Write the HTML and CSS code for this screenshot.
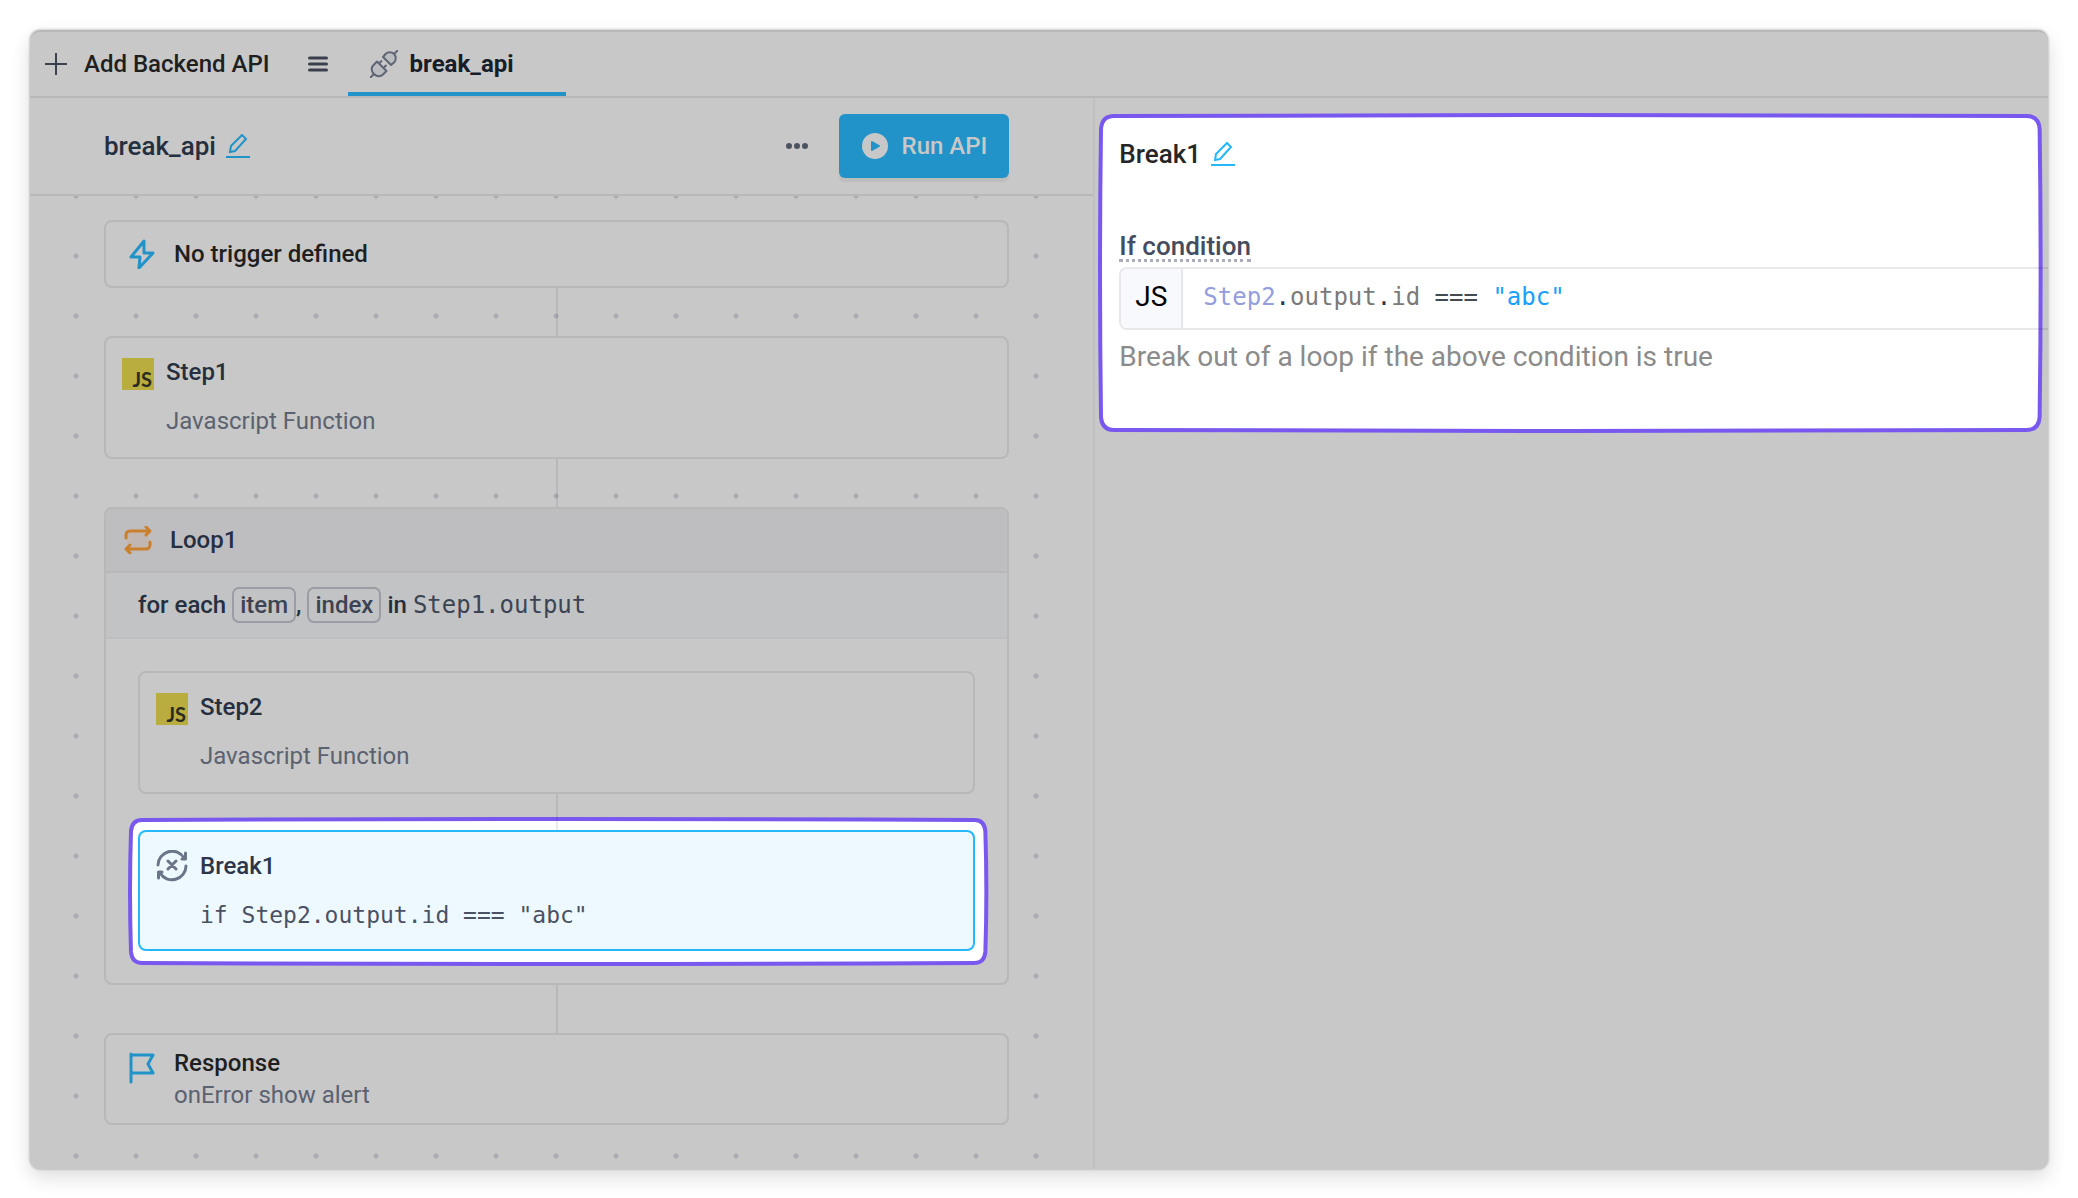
FILE: index.html
```html
<!DOCTYPE html>
<html lang="en">
<head>
<meta charset="utf-8">
<title>break_api</title>
<link rel="stylesheet" href="styles.css">
</head>
<body>
<div class="app">
  <nav class="tabs">
    <button class="add" type="button">
      <svg width="22" height="22" viewBox="0 0 22 22" fill="none" stroke="#3a414d" stroke-width="2"><path d="M11 0v22M0 11h22"/></svg>
      Add Backend API
    </button>
    <button class="menu" type="button" aria-label="All APIs">
      <svg width="20" height="16" viewBox="0 0 20 16" fill="none" stroke="#3a414d" stroke-width="3" stroke-linecap="round"><path d="M1.500 2h17M1.500 8h17M1.500 14h17"/></svg>
    </button>
    <a class="tab" href="#break_api">
      <svg width="28" height="28" viewBox="0 0 28 28" fill="none" stroke="#5f6673" stroke-width="2" stroke-linejoin="round"><path fill="#bbbcc0" d="M7 11.500L3.500 15a6 6 0 0 0 0 8.500l1 1a6 6 0 0 0 8.500 0L16.500 21z" /><path fill="#bbbcc0" d="M13 7l2.500-3a6 6 0 0 1 8.500 0a6 6 0 0 1 0 8.500L21 15z"/><path d="M0 28l4-4M24 4l4-4M9 13.500l3-3M13.500 18l3-3"/></svg>
      break_api
    </a>
  </nav>
  <div class="columns">
    <main class="flow">
      <header class="bar">
        <h1 class="name">break_api</h1>
        <button class="edit dim" type="button" aria-label="Rename"><svg width="24" height="24" viewBox="0 0 24 24" fill="none" stroke="currentColor" stroke-width="2"><path d="M0 23h24M4 18l1-6L16 1l4 4L9 17z"/></svg></button>
        <button class="more" type="button" aria-label="More"><svg width="22" height="6" viewBox="0 0 22 6" fill="#4b5262"><circle cx="3" cy="3" r="3"/><circle cx="11" cy="3" r="3"/><circle cx="19" cy="3" r="3"/></svg></button>
        <button class="run" type="button">
          <svg width="26" height="26" viewBox="0 0 26 26"><circle cx="13" cy="13" r="13" fill="#c8c8c8"/><path d="M10 9l7 4-7 4z" fill="#2193c9" stroke="#2193c9" stroke-width="2" stroke-linejoin="round"/></svg>
          Run API
        </button>
      </header>
      <div class="canvas">
        <section class="card trigger">
          <svg width="26" height="30" viewBox="0 0 26 30" fill="none" stroke="#2193c9" stroke-width="3" stroke-linejoin="round"><path d="M15 2L2 18h9l-1 11L24 14h-9z"/></svg>
          <h2>No trigger defined</h2>
        </section>
        <div class="wire"></div>
        <section class="card step">
          <span class="js">JS</span>
          <div class="text"><h2>Step1</h2><p>Javascript Function</p></div>
        </section>
        <div class="wire"></div>
        <section class="card loop">
          <header class="loop-head">
            <svg width="28" height="28" viewBox="0 0 28 28" fill="none" stroke="#ca7f2c" stroke-width="3" stroke-linecap="round" stroke-linejoin="round"><rect x="3" y="5" width="22" height="18" rx="3" fill="#c2b6b0" stroke="none"/><path d="M2 12V9a4 4 0 0 1 4-4h20M22 1l4 4-4 4M26 16v3a4 4 0 0 1-4 4H2M6 19l-4 4 4 4"/></svg>
            <h2>Loop1</h2>
          </header>
          <p class="each">for each <span class="var">item</span><span class="comma">,</span><span class="var">index</span> in <code>Step1.output</code></p>
          <div class="body">
            <section class="card step">
              <span class="js">JS</span>
              <div class="text"><h2>Step2</h2><p>Javascript Function</p></div>
            </section>
            <div class="wire short"></div>
            <div class="marked">
              <svg class="ring" viewBox="0 0 860 148" preserveAspectRatio="none"><path d="M14 3Q430 1 846 3Q856 3 857 14Q859 74 857 134Q856 145 846 145Q430 147 14 145Q4 145 3 134Q1 74 3 14Q4 3 14 3Z"/></svg>
              <section class="card step active">
                <svg width="32" height="32" viewBox="0 0 32 32" fill="none" stroke="#6b7588" stroke-width="3" stroke-linecap="round" stroke-linejoin="round"><path d="M2 15A14 14 0 0 1 28 8M29.500 3v6H26M30 16A14 14 0 0 1 4 23M2.500 28v-6H6M12 11l8 8M20 11l-8 8"/></svg>
                <div class="text"><h2>Break1</h2><p><code>if Step2.output.id === "abc"</code></p></div>
              </section>
            </div>
          </div>
        </section>
        <div class="wire"></div>
        <section class="card response">
          <svg width="26" height="32" viewBox="0 0 26 32" fill="none" stroke="#2193c9" stroke-width="3" stroke-linecap="round" stroke-linejoin="round"><path d="M2 2v28M2 3h22l-5 9 5 9H2"/></svg>
          <div><h2>Response</h2><p>onError show alert</p></div>
        </section>
      </div>
    </main>
    <aside class="side">
      <section class="panel">
        <svg class="ring" viewBox="0 0 944 320" preserveAspectRatio="none"><path d="M16 3Q472 1 928 3Q940 3 941 16Q943 160 941 304Q940 317 928 317Q472 319 16 317Q4 317 3 304Q1 160 3 16Q4 3 16 3Z"/></svg>
        <div class="title"><h2>Break1</h2>
          <button class="edit" type="button" aria-label="Rename step"><svg width="24" height="26" viewBox="0 0 24 26" fill="none" stroke="currentColor" stroke-width="2"><path d="M0 24h24M4 19l1-6L16 2l4 4L9 18z"/></svg></button>
        </div>
        <span class="label" id="cond">If condition</span>
        <div class="field">
          <span class="lang">JS</span>
          <code class="code" role="textbox" aria-labelledby="cond" contenteditable="true" spellcheck="false"><span class="id">Step2</span><span class="dot">.</span>output<span class="dot">.</span>id <span class="op">===</span> <span class="str">"abc"</span></code>
        </div>
        <p class="hint">Break out of a loop if the above condition is true</p>
      </section>
    </aside>
  </div>
</div>
</body>
</html>
```
FILE: styles.css
```css
* { box-sizing: border-box; }
body {
  margin: 0;
  padding: 30px 30px 28px;
  background: #fff;
  color: #262f40;
  font: 400 24px/32px Roboto, "Liberation Sans", sans-serif;
}
h1, h2, p { margin: 0; font-size: 24px; font-weight: 400; }
h2 { font-weight: 500; }
svg { display: block; flex: none; }
button { padding: 0; border: 0; background: none; color: inherit; font: inherit; }
code { font-family: "DejaVu Sans Mono", monospace; }

.app {
  display: flex;
  flex-direction: column;
  min-height: calc(100vh - 59px);
  border-top: 2px solid #b8b8b8;
  border-radius: 10px;
  background: #c8c8c8;
  box-shadow: 0 0 2px 1px rgba(0, 0, 0, .16), 0 8px 20px rgba(0, 0, 0, .14);
}

.tabs {
  display: flex;
  height: 66px;
  border-bottom: 2px solid #b8b8b8;
}
.add {
  display: flex;
  align-items: center;
  gap: 17px;
  padding-left: 15px;
  color: #1f1f1f;
  font-weight: 500;
}
.menu { padding: 0 20px 0 38px; }
.tab {
  display: flex;
  align-items: center;
  gap: 12px;
  width: 218px;
  padding: 4px 0 0 22px;
  border-bottom: 4px solid #2193c9;
  color: #171d29;
  font-weight: 700;
  text-decoration: none;
}

.columns { display: flex; flex: 1; }
.flow {
  display: flex;
  flex: 1066;
  flex-direction: column;
  min-width: 0;
  border-right: 2px solid #c0c0c1;
}
.bar {
  display: flex;
  align-items: center;
  height: 98px;
  padding: 0 84px 0 74px;
  border-bottom: 2px solid #b8b8b8;
}
.name { font-size: 26px; font-weight: 500; }
.edit { margin-left: 10px; color: #25b8fb; }
.dim { color: #2193c9; }
.more { margin-left: auto; }
.run {
  display: flex;
  align-items: center;
  gap: 14px;
  height: 64px;
  margin-left: 31px;
  padding: 0 22px 0 23px;
  border-radius: 6px;
  background: #2193c9;
  box-shadow: 0 4px 0 #bdbdbd;
  color: #c8c8c8;
  font-weight: 500;
}

.canvas {
  flex: 1;
  padding: 24px 84px 44px 74px;
  background: radial-gradient(circle, #ababb2 2px, transparent 3px) 16px -30px / 60px 60px;
}
.card {
  display: flex;
  border: 2px solid #b8b8b8;
  border-radius: 8px;
  background: #c8c8c8;
}
.card p { color: #5b6270; }
.wire {
  width: 2px;
  height: 48px;
  margin: 0 auto;
  background: rgba(0, 0, 20, .08);
}
.short { position: relative; z-index: 1; height: 36px; }
.trigger { align-items: center; gap: 19px; height: 68px; padding-left: 23px; }
.trigger h2, .response h2 { color: #1f1f1f; }
.step { gap: 12px; height: 123px; padding: 18px 16px; }
.text p { margin-top: 17px; }
.js {
  width: 32px;
  height: 32px;
  margin-top: 2px;
  padding: 8px 2px 0 0;
  background: #baad3f;
  color: #2a2a22;
  font: 700 20px/26px Lato, sans-serif;
  text-align: right;
}
.loop { flex-direction: column; overflow: hidden; }
.loop-head {
  display: flex;
  align-items: center;
  gap: 18px;
  height: 64px;
  padding-left: 18px;
  border-bottom: 2px solid #b8b8ba;
  background: #bebec0;
}
.card .each {
  display: flex;
  align-items: center;
  gap: 6px;
  height: 66px;
  padding-left: 32px;
  border-bottom: 2px solid #bebec0;
  background: #c2c3c5;
  color: #262f40;
  font-weight: 500;
}
.each code { color: #3c4453; font-weight: 400; }
.var {
  height: 36px;
  padding: 0 6px;
  border: 2px solid #9b9da5;
  border-radius: 7px;
  color: #3c4453;
}
.comma { margin-left: -6px; }
.body { padding: 32px; }
.marked { position: relative; }
.ring {
  position: absolute;
  top: -13px;
  left: -10px;
  width: calc(100% + 23px);
  height: calc(100% + 28px);
  overflow: visible;
}
.ring path { fill: #fff; stroke: #7858ef; stroke-width: 4px; vector-effect: non-scaling-stroke; }
.card.active { position: relative; height: 121px; border-color: #25b8fb; background: #edf9ff; }
.active h2 { color: #2c3549; }
.active code { color: #4a5162; font-size: 23px; }
.response { gap: 19px; height: 92px; padding: 12px 23px; }
.response svg { margin-top: 5px; }

.side { flex: 952; min-width: 0; padding: 15px 0 0 3px; }
.panel { position: relative; padding: 25px 0 60px 21px; }
.side .ring { top: 0; left: 0; width: calc(100% - 5px); height: 100%; }
.title, .label, .field, .hint { position: relative; }
.title { display: flex; align-items: center; }
.title h2 { color: #262626; font-size: 26px; }
.label {
  display: block;
  width: fit-content;
  margin-top: 63px;
  border-bottom: 3px dotted #a9adbd;
  color: #444c5f;
  font-size: 26px;
  font-weight: 500;
  line-height: 26px;
}
.field {
  display: flex;
  height: 63px;
  margin-top: 5px;
  border: 2px solid rgba(0, 0, 30, .09);
  border-right: 0;
  border-radius: 8px 0 0 8px;
}
.lang {
  width: 62px;
  border-right: 2px solid #e6e7ee;
  border-radius: 6px 0 0 6px;
  background: #f8f9fc;
  color: #000;
  font-size: 28px;
  line-height: 56px;
  text-align: center;
}
.code { padding-left: 20px; outline: 0; color: #7a7a7a; line-height: 56px; white-space: pre; }
.id { color: #949ddd; }
.dot { color: #2c3549; }
.op { color: #444b50; }
.str { color: #18a0fb; }
.hint { margin-top: 11px; color: #8b8b8b; font-size: 28px; }
```
